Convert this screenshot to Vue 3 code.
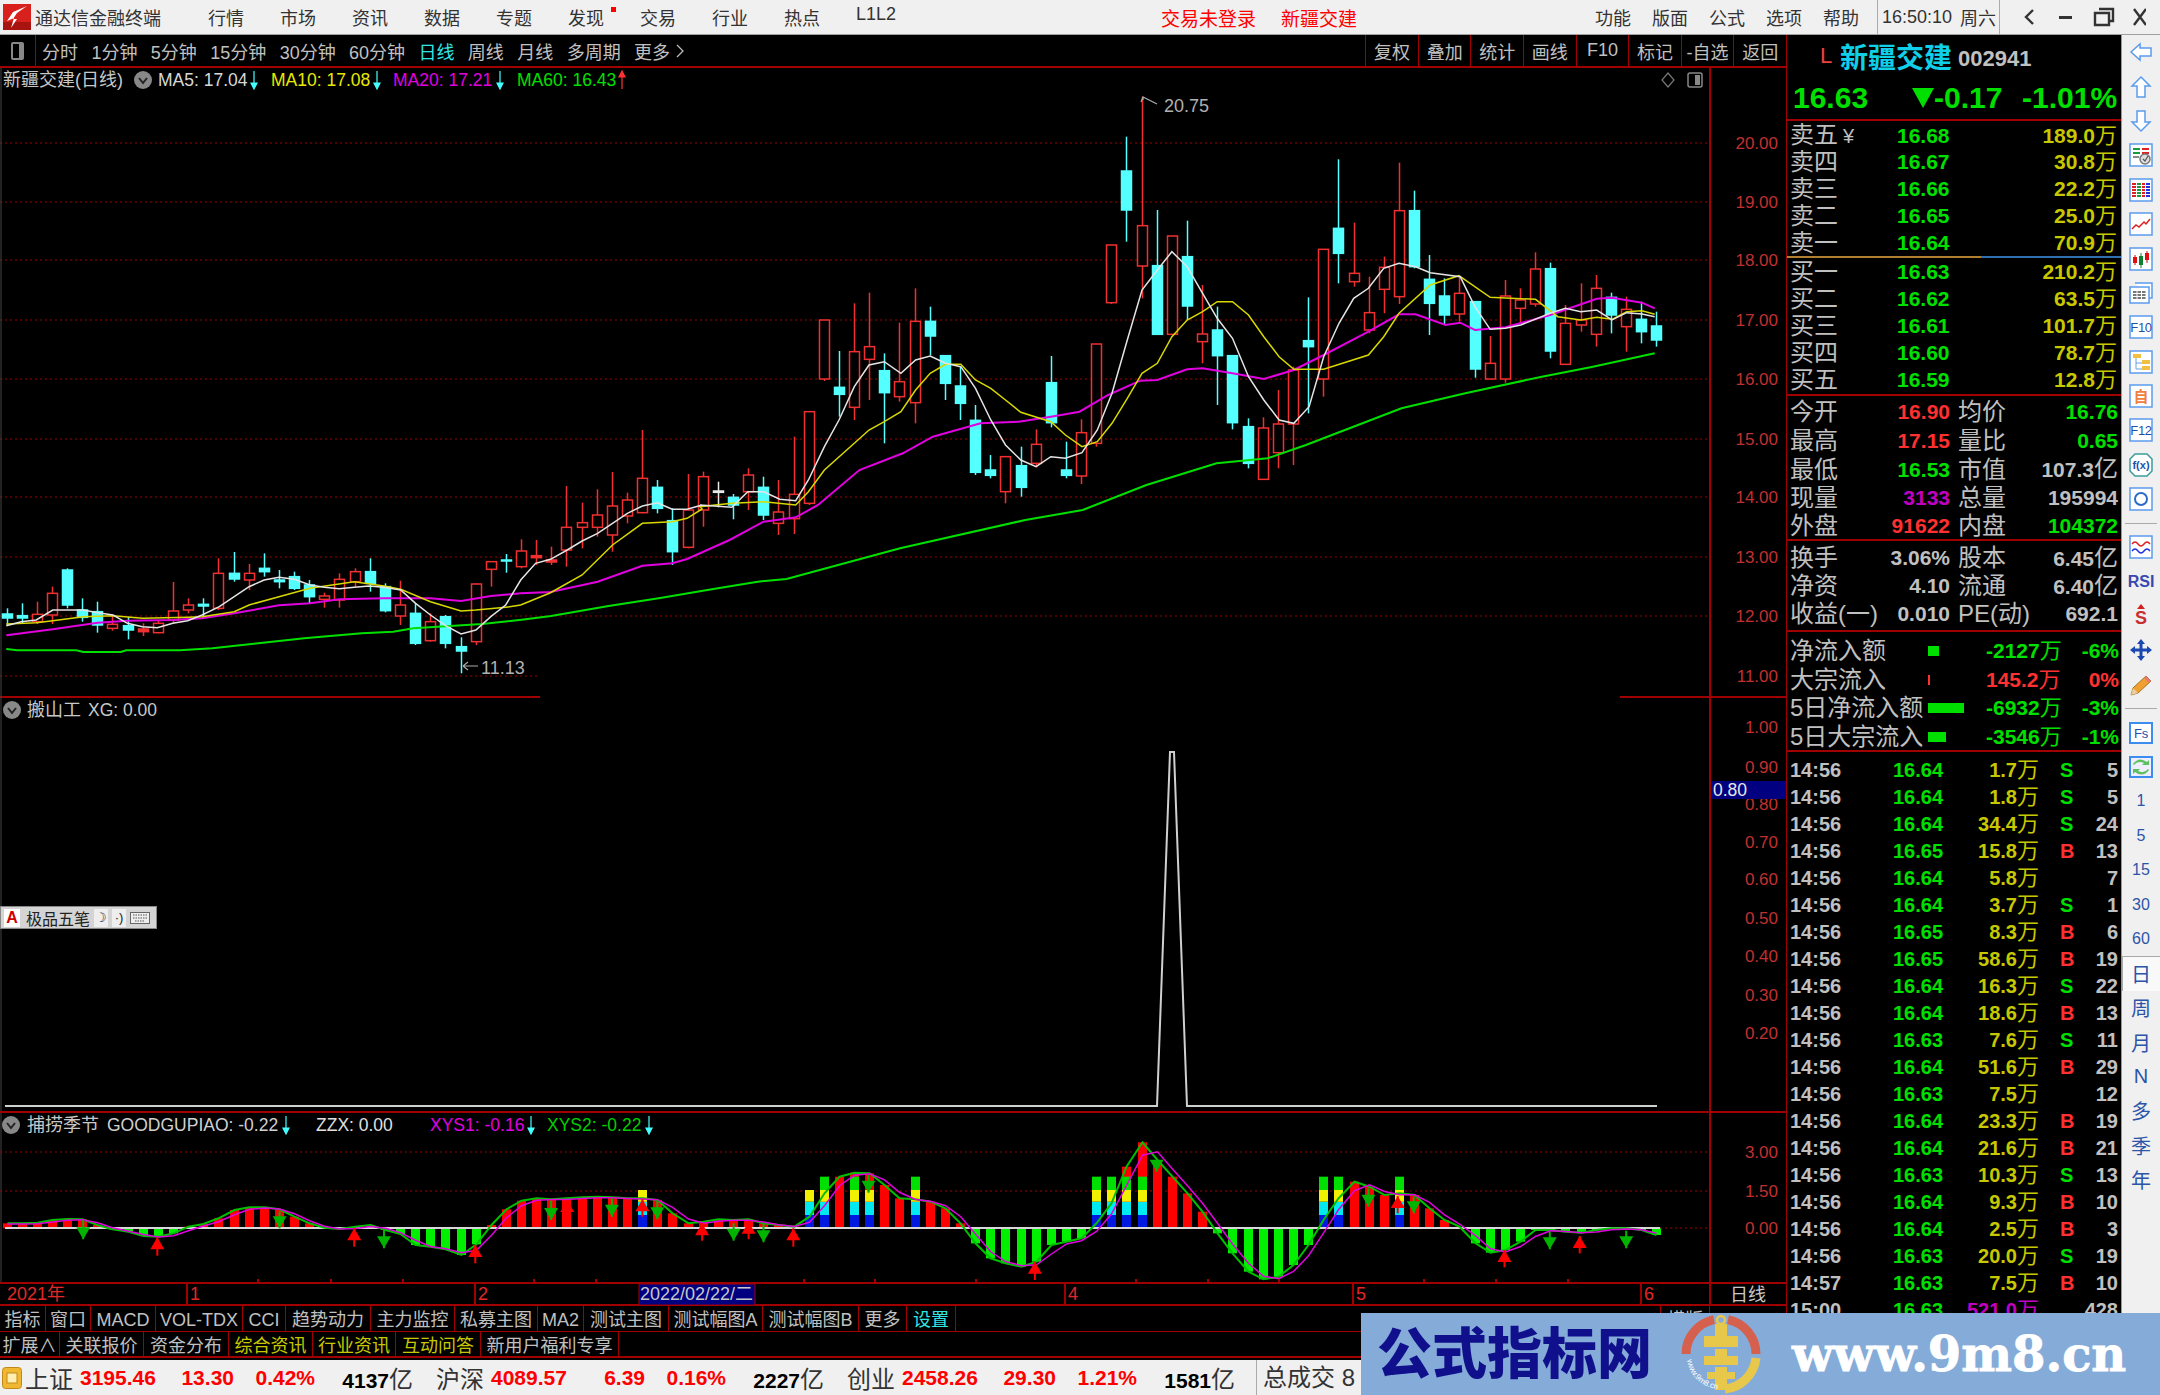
<template>
  <div class="app">
    <!-- 标题栏 -->
    <div class="titlebar">
      <svg class="logo" width="28" height="26" viewBox="0 0 28 26">
        <rect width="28" height="26" fill="#d8201c" />
        <rect x="0" y="18" width="28" height="8" fill="#a81410" />
        <path d="M24 2 L10 8 L4 17 L11 14 L8 24 L14 15 L10 15 L14 9 Z" fill="#fff" />
      </svg>
      <span class="app-name">通达信金融终端</span>
      <div class="menu">
        <span v-for="m in menus" :key="m" class="menu-item" :class="{ flagged: m === '发现' }">{{ m }}</span>
      </div>
      <span class="login-info">交易未登录</span>
      <span class="login-stock">新疆交建</span>
      <div class="menu-right">
        <span v-for="m in menusRight" :key="m">{{ m }}</span>
      </div>
      <div class="clock"><span>16:50:10</span><span>周六</span></div>
      <div class="win-btns">
        <svg width="130" height="24" viewBox="0 0 130 24">
          <path d="M17 5 L10 12 L17 19" fill="none" stroke="#333" stroke-width="2.4" />
          <rect x="43" y="11" width="13" height="3" fill="#333" />
          <path d="M83 4 H97 V16 H93 M79 8 H93 V20 H79 Z" fill="none" stroke="#333" stroke-width="2.4" />
          <path d="M118 4 L130 20 M130 4 L118 20" fill="none" stroke="#333" stroke-width="2.4" />
        </svg>
      </div>
    </div>

    <div class="main">
      <div class="left">
        <!-- 周期工具条 -->
        <div class="toolbar">
          <div class="tb-icon"><i></i></div>
          <div class="periods">
            <span v-for="p in periods" :key="p" :class="{ active: p === '日线' }">{{ p }}</span>
            <span class="more">更多<svg width="10" height="18" viewBox="0 0 10 18"><path d="M2 3 L8 9 L2 15" fill="none" stroke="#bbb" stroke-width="1.3" /></svg></span>
          </div>
          <div class="tb-right">
            <span v-for="b in toolButtons" :key="b">{{ b }}</span>
          </div>
        </div>

        <!-- K线 + 副图 -->
        <svg class="chart" width="1786" height="1238" viewBox="0 68 1786 1238">
          <!-- 价格网格 -->
          <line v-for="a in mainAxis" :key="a.t" x1="0" :x2="a.t === '11.00' ? 540 : 1710" :y1="a.y" :y2="a.y" class="dot" />
          <line x1="0" x2="540" y1="697" y2="697" class="grid" />
          <line x1="1620" x2="1786" y1="697" y2="697" class="grid" />
          <line x1="1710" x2="1710" y1="68" y2="1306" class="grid" />
          <line x1="1" x2="1" y1="68" y2="1283" stroke="#444" />
          <text v-for="a in mainAxis" :key="'m' + a.t" x="1778" :y="a.y + 6" class="axis">{{ a.t }}</text>

          <!-- 蜡烛 -->
          <g v-for="c in candles" :key="c.x">
            <line :x1="c.x" :x2="c.x" :y1="c.wt" :y2="c.wb" :stroke="c.color" stroke-width="1.5" />
            <rect :x="c.x - 5" :y="c.bt" width="10" :height="c.bh" :fill="c.fill" :stroke="c.color" stroke-width="1.5" />
          </g>

          <polyline v-for="m in maLines" :key="m.color" :points="m.pts" :stroke="m.color" :stroke-width="m.w" fill="none" />

          <path d="M1143 100 V97 L1157 104 M1143 97 L1141 102" fill="none" stroke="#aaa" stroke-width="1.2" />
          <text x="1164" y="112" class="mark">20.75</text>
          <path d="M463 666 H478 M463 666 L468 662 M463 666 L468 670" fill="none" stroke="#aaa" stroke-width="1.2" />
          <text x="481" y="674" class="mark">11.13</text>

          <!-- 主图标题 -->
          <text x="3" y="86" class="label">新疆交建(日线)</text>
          <g transform="translate(143 80)"><circle r="9" fill="#888" /><path d="M-4 -2 L0 3 L4 -2" fill="none" stroke="#222" stroke-width="2" /></g>
          <g v-for="l in mainLegend" :key="l.t">
            <text :x="l.x" y="86" class="legend" :fill="l.color">{{ l.t }}</text>
            <path :d="arrowPath(l.ax, 71, l.down)" :stroke="l.down ? '#4ff' : '#f33'" :fill="l.down ? '#4ff' : '#f33'" stroke-width="1.2" />
          </g>
          <path d="M1668 73 L1674 80 L1668 87 L1662 80 Z" fill="none" stroke="#777" stroke-width="1.2" />
          <rect x="1688" y="73" width="14" height="14" rx="2" fill="none" stroke="#888" stroke-width="1.5" />
          <rect x="1695" y="75" width="5" height="10" fill="#888" />

          <!-- 搬山工 -->
          <g transform="translate(12 710)"><circle r="9" fill="#888" /><path d="M-4 -2 L0 3 L4 -2" fill="none" stroke="#222" stroke-width="2" /></g>
          <text x="27" y="716" class="label">搬山工</text>
          <text x="88" y="716" class="legend" fill="#c8c8c8">XG: 0.00</text>
          <text v-for="a in pane1Axis" :key="'a' + a.t" x="1778" :y="a.y + 6" class="axis">{{ a.t }}</text>
          <rect x="1711" y="781" width="75" height="18" fill="#000080" />
          <text x="1713" y="796" class="legend" fill="#e8e8e8">0.80</text>
          <polyline points="5,1106 1157,1106 1170,752 1174,752 1187,1106 1657,1106" fill="none" stroke="#cfcfcf" stroke-width="2" />

          <!-- 捕捞季节 -->
          <line x1="0" x2="1786" y1="1112" y2="1112" class="grid" />
          <g transform="translate(11 1125)"><circle r="9" fill="#888" /><path d="M-4 -2 L0 3 L4 -2" fill="none" stroke="#222" stroke-width="2" /></g>
          <text x="27" y="1131" class="label">捕捞季节</text>
          <g v-for="l in oscLegend" :key="l.t">
            <text :x="l.x" y="1131" class="legend" :fill="l.color">{{ l.t }}</text>
            <path v-if="l.ax" :d="arrowPath(l.ax, 1116, true)" stroke="#4ff" fill="#4ff" stroke-width="1.2" />
          </g>
          <line x1="0" x2="1710" y1="1152" y2="1152" class="dot" />
          <line x1="0" x2="1710" y1="1191" y2="1191" class="dot" />
          <line x1="1660" x2="1710" y1="1228" y2="1228" class="dot" />
          <text v-for="a in pane2Axis" :key="'b' + a.t" x="1778" :y="a.y + 6" class="axis">{{ a.t }}</text>
          <rect v-for="b in oscBars" :key="b.k" :x="b.x" :y="b.y" width="9" :height="b.h" :fill="b.color" />
          <line x1="5" x2="1660" y1="1228" y2="1228" stroke="#d8d8d8" stroke-width="2" />
          <polyline :points="oscLine" fill="none" stroke="#00c000" stroke-width="2" />
          <polyline :points="oscLine2" fill="none" stroke="#e000e0" stroke-width="1.5" />
          <g v-for="a in oscArrows" :key="a.k">
            <line :x1="a.x" :x2="a.x" :y1="a.y1" :y2="a.y2" :stroke="a.color" stroke-width="2" />
            <polygon :points="a.head" :fill="a.color" />
          </g>

          <!-- 时间轴 -->
          <line x1="0" x2="1786" y1="1283" y2="1283" class="grid" />
          <line x1="0" x2="1786" y1="1305" y2="1305" class="grid" />
          <line v-for="t in dateTicks" :key="t" :x1="t" :x2="t" y1="1279" y2="1283" class="grid" />
          <line v-for="d in dateLabels" :key="'d' + d.t" :x1="d.x - 3" :x2="d.x - 3" y1="1283" y2="1305" class="grid" />
          <text x="7" y="1300" class="date">2021年</text>
          <text v-for="d in dateLabels" :key="'e' + d.t" :x="d.x" y="1300" class="date">{{ d.t }}</text>
          <rect x="639" y="1284" width="116" height="21" fill="#000080" stroke="#a00000" />
          <text x="640" y="1300" class="date-sel">2022/02/22/二</text>
          <text x="1730" y="1301" class="label">日线</text>
        </svg>

        <div class="tabs">
          <span v-for="t in tabs1" :key="t.t" :class="{ cyan: t.t === '设置' }" :style="{ width: t.w + 'px' }">{{ t.t }}</span>
          <span class="tab-end">横版</span>
        </div>
        <div class="tabs tabs-second">
          <span v-for="t in tabs2" :key="t.t" :class="{ yellow: t.hot }" :style="{ width: t.w + 'px' }">{{ t.t }}</span>
        </div>

        <!-- 输入法状态条 -->
        <div class="ime">
          <b>A</b><span>极品五笔</span><i>☽</i><i>·)</i>
          <svg width="20" height="12" viewBox="0 0 20 12"><rect x="0.5" y="0.5" width="19" height="11" fill="#eee" stroke="#666" /><path d="M3 3 H17 M3 6 H17 M5 9 H15" stroke="#555" stroke-dasharray="1.5 1" /></svg>
        </div>
      </div>

      <!-- 右侧盘口 -->
      <div class="panel">
        <div class="stock-head">
          <span class="market">L</span><span class="stock-name">新疆交建</span><span class="stock-code">002941</span>
        </div>
        <div class="price-row">
          <span class="price-now">16.63</span>
          <span class="price-chg"><i class="tri"></i>-0.17</span>
          <span class="price-pct">-1.01%</span>
        </div>
        <div class="divider"></div>
        <div v-for="(q, i) in sells" :key="q.n" class="quote">
          <span class="cn">{{ q.n }}<em v-if="i === 0">¥</em></span><span class="green">{{ q.p }}</span><span class="vol">{{ q.v }}<i>万</i></span>
        </div>
        <div class="divider-mid"></div>
        <div v-for="q in buys" :key="q.n" class="quote">
          <span class="cn">{{ q.n }}</span><span class="green">{{ q.p }}</span><span class="vol">{{ q.v }}<i>万</i></span>
        </div>
        <div class="divider after-book"></div>
        <div v-for="s in stats1" :key="s.a" class="stat">
          <span class="cn">{{ s.a }}</span><span :class="s.ca">{{ s.av }}</span><span></span><span class="cn">{{ s.b }}</span><span :class="s.cb">{{ s.bv }}<i v-if="s.bu">{{ s.bu }}</i></span>
        </div>
        <div class="divider"></div>
        <div v-for="s in stats2" :key="s.a" class="stat stat-tight">
          <span class="cn">{{ s.a }}</span><span class="grey">{{ s.av }}</span><span></span><span class="cn">{{ s.b }}</span><span class="grey">{{ s.bv }}<i v-if="s.bu">{{ s.bu }}</i></span>
        </div>
        <div class="divider after-fin"></div>
        <div v-for="f in flows" :key="f.n" class="flow">
          <span class="cn">{{ f.n }}</span>
          <span><i class="flow-bar" :style="{ width: f.w + 'px', background: f.c }"></i></span>
          <span class="flow-val" :style="{ color: f.c }">{{ f.v }}<i>万</i></span>
          <span class="flow-pct" :style="{ color: f.c }">{{ f.p }}</span>
        </div>
        <div class="divider after-flow"></div>
        <div v-for="(t, i) in trades" :key="i" class="trade">
          <span class="grey">{{ t[0] }}</span>
          <span class="green">{{ t[1] }}</span>
          <span class="trade-vol" :class="{ big: t[4] > 400 }">{{ t[2] }}<i>万</i></span>
          <span class="side" :class="t[3] === 'B' ? 'red' : 'green'">{{ t[3] }}</span>
          <span class="grey num">{{ t[4] }}</span>
        </div>
      </div>

      <!-- 右侧工具栏 -->
      <div class="sidebar">
        <div class="side-item"><svg viewBox="0 0 24 24"><polygon points="2,12 11,4 11,8 22,8 22,16 11,16 11,20" class="arrow-ic" /></svg></div>
        <div class="side-item"><svg viewBox="0 0 24 24"><polygon points="12,2 21,11 16,11 16,22 8,22 8,11 3,11" class="arrow-ic" /></svg></div>
        <div class="side-item"><svg viewBox="0 0 24 24"><polygon points="12,22 21,13 16,13 16,2 8,2 8,13 3,13" class="arrow-ic" /></svg></div>
        <div class="side-item"><svg viewBox="0 0 24 24"><rect x="1" y="1" width="22" height="22" class="frame" /><path d="M4 6 H11 M4 10 H11" stroke="#1a9a3c" stroke-width="2" /><path d="M13 6 H20 M13 10 H20" stroke="#e02020" stroke-width="2" /><path d="M4 14 H10" stroke="#888" stroke-width="2" /><circle cx="16" cy="16" r="5" fill="#ddd" stroke="#777" stroke-width="1.5" /><path d="M14 16 L16 18 L19 13" fill="none" stroke="#555" stroke-width="1.2" /></svg></div>
        <div class="side-item"><svg viewBox="0 0 24 24"><rect x="1" y="1" width="22" height="22" class="frame" /><path d="M5 5 V19" stroke="#e02020" stroke-width="4" stroke-dasharray="2 1" /><path d="M10 5 V19" stroke="#1a9a3c" stroke-width="4" stroke-dasharray="2 1" /><path d="M14.5 5 V19" stroke="#e02020" stroke-width="3" stroke-dasharray="2 1" /><path d="M19 5 V19" stroke="#2030e0" stroke-width="4" stroke-dasharray="2 1" /></svg></div>
        <div class="side-item"><svg viewBox="0 0 24 24"><rect x="1" y="1" width="22" height="22" class="frame" /><polyline points="3,17 7,13 10,15 15,10 17,12 21,7" fill="none" stroke="#e02020" stroke-width="1.5" /></svg></div>
        <div class="side-item"><svg viewBox="0 0 24 24"><rect x="1" y="1" width="22" height="22" class="frame" /><path d="M6 8 V18 M18 4 V16" stroke="#c01010" /><path d="M12 6 V21" stroke="#108030" /><rect x="4" y="10" width="4" height="6" fill="#e01010" /><rect x="10" y="9" width="4" height="9" fill="#108030" /><rect x="16" y="6" width="4" height="7" fill="#e01010" /></svg></div>
        <div class="side-item"><svg viewBox="0 0 24 24"><path d="M6 2 H23 V17 H20" class="frame" /><rect x="1" y="6" width="19" height="16" class="frame" /><path d="M4 11 H17 M4 14 H17 M4 17 H17" stroke="#777" stroke-width="2" stroke-dasharray="3.5 1" /></svg></div>
        <div class="side-item"><svg viewBox="0 0 24 24"><rect x="1" y="1" width="22" height="22" class="frame" /><text x="12" y="17" class="ic-text">F10</text></svg></div>
        <div class="side-item"><svg viewBox="0 0 24 24"><rect x="1" y="1" width="22" height="22" class="frame" /><path d="M7 7 V19 H14 M7 13 H14" fill="none" stroke="#6aa0e0" /><rect x="4" y="4" width="8" height="4" fill="#f2c040" /><rect x="13" y="10" width="8" height="4" fill="#f2c040" /><rect x="13" y="16" width="8" height="4" fill="#f2c040" /></svg></div>
        <div class="side-item"><svg viewBox="0 0 24 24"><rect x="1" y="1" width="22" height="22" class="frame" /><text x="12" y="18" class="ic-cn">自</text></svg></div>
        <div class="side-item"><svg viewBox="0 0 24 24"><rect x="1" y="1" width="22" height="22" class="frame" /><text x="12" y="17" class="ic-text">F12</text></svg></div>
        <div class="side-item"><svg viewBox="0 0 24 24"><path d="M6 1 H18 L23 6 V18 L18 23 H6 L1 18 V6 Z" fill="#fff" stroke="#3b9c9c" stroke-width="1.5" /><text x="12" y="16" class="ic-fx">f(x)</text></svg></div>
        <div class="side-item"><svg viewBox="0 0 24 24"><rect x="1" y="1" width="22" height="22" class="frame" /><circle cx="12" cy="12" r="6" fill="none" stroke="#2a6cc8" stroke-width="2" /></svg></div>
        <div class="side-sep"></div>
        <div class="side-item"><svg viewBox="0 0 24 24"><rect x="1" y="1" width="22" height="22" class="frame" /><path d="M3 9 Q6 5 9 9 T15 9 T21 9" fill="none" stroke="#e02020" stroke-width="1.4" /><path d="M3 16 Q6 12 9 16 T15 16 T21 16" fill="none" stroke="#2030e0" stroke-width="1.4" /></svg></div>
        <div class="side-item"><span class="rsi">RSI</span></div>
        <div class="side-item"><svg viewBox="0 0 24 24"><polygon points="12,0 16,5 8,5" fill="#d02020" /><text x="12" y="20" class="ic-s">S</text></svg></div>
        <div class="side-item"><svg viewBox="0 0 24 24"><path d="M12 1 L16 6 H8 Z M12 23 L16 18 H8 Z M1 12 L6 8 V16 Z M23 12 L18 8 V16 Z" fill="#1848b0" /><rect x="6" y="10.5" width="12" height="3" fill="#1848b0" /><rect x="10.5" y="6" width="3" height="12" fill="#1848b0" /></svg></div>
        <div class="side-item"><svg viewBox="0 0 24 24"><polygon points="2,22 4,15 17,3 22,8 9,20" fill="#f0a030" stroke="#a87020" /><polygon points="17,3 22,8 20,10 15,5" fill="#e87878" /><polygon points="2,22 4,15 9,20" fill="#e8d0a0" /></svg></div>
        <div class="side-sep"></div>
        <div class="side-item"><svg viewBox="0 0 24 24"><rect x="1" y="2" width="22" height="20" fill="#fff" stroke="#3d8cf0" stroke-width="2" /><text x="12" y="17" class="ic-text">Fs</text></svg></div>
        <div class="side-item"><svg viewBox="0 0 24 24"><rect x="1" y="2" width="22" height="20" fill="#eef" stroke="#3d8cf0" stroke-width="2" /><path d="M5 10 Q9 5 15 8 L13 10 H20 V5 L18 7 Q10 1 4 9 Z M19 14 Q15 19 9 16 L11 14 H4 V19 L6 17 Q14 23 20 15 Z" fill="#5cc05c" /></svg></div>
        <div v-for="n in sideNums" :key="n" class="side-item side-num">{{ n }}</div>
        <div v-for="c in sideCycles" :key="c" class="side-item side-cn" :class="{ selected: c === '日' }">{{ c }}</div>
      </div>
    </div>

    <!-- 状态栏 -->
    <div class="statusbar">
      <svg width="20" height="22" viewBox="0 0 20 22"><rect x="0.5" y="0.5" width="19" height="21" rx="3" fill="#f0b830" stroke="#c08818" /><rect x="5" y="6" width="10" height="10" fill="#ffeeb0" stroke="#c08818" /></svg>
      <div v-for="s in indices" :key="s.n" class="idx">
        <span class="idx-name">{{ s.n }}</span>
        <span class="idx-red">{{ s.v }}</span>
        <span class="idx-red idx-r">{{ s.c }}</span>
        <span class="idx-red idx-r">{{ s.p }}</span>
        <span class="idx-amt">{{ s.a }}<i>亿</i></span>
      </div>
      <div class="total">总成交 8</div>
    </div>

    <!-- 水印 -->
    <div class="watermark">
      <span class="wm-cn">公式指标网</span>
      <svg class="wm-logo" width="80" height="80" viewBox="0 0 80 80">
        <defs><path id="wm-arc" d="M6 46 A34 34 0 0 0 36 75" /></defs>
        <path d="M5 40 A35 35 0 0 1 33 5.7 M47 5.7 A35 35 0 0 1 75 40" fill="none" stroke="#d5604e" stroke-width="9" />
        <path d="M75 44 A35 35 0 0 1 44 75" fill="none" stroke="#e8c84a" stroke-width="9" />
        <circle cx="40" cy="6" r="4" fill="none" stroke="#e8c84a" stroke-width="2.5" />
        <rect x="34" y="10" width="12" height="66" fill="#e8c84a" />
        <rect x="23" y="22" width="34" height="11" fill="#e8c84a" />
        <rect x="23" y="42" width="34" height="9" fill="#e8c84a" />
        <rect x="26" y="58" width="28" height="7" fill="#e8c84a" />
        <path d="M30 34 H50 M30 52 H50" stroke="#85acd8" stroke-width="2" />
        <text class="wm-mini"><textPath href="#wm-arc">www.9m8.cn</textPath></text>
      </svg>
      <span class="wm-url">www.9m8.cn</span>
    </div>
  </div>
</template>

<script setup>
const menus = ['行情', '市场', '资讯', '数据', '专题', '发现', '交易', '行业', '热点', 'L1L2']
const menusRight = ['功能', '版面', '公式', '选项', '帮助']
const periods = ['分时', '1分钟', '5分钟', '15分钟', '30分钟', '60分钟', '日线', '周线', '月线', '多周期']
const toolButtons = ['复权', '叠加', '统计', '画线', 'F10', '标记', '-自选', '返回']
const tabs1 = [
  { t: '指标', w: 46 }, { t: '窗口', w: 45 }, { t: 'MACD', w: 65 }, { t: 'VOL-TDX', w: 87 }, { t: 'CCI', w: 43 },
  { t: '趋势动力', w: 85 }, { t: '主力监控', w: 84 }, { t: '私募主图', w: 83 }, { t: 'MA2', w: 46 }, { t: '测试主图', w: 85 },
  { t: '测试幅图A', w: 94 }, { t: '测试幅图B', w: 96 }, { t: '更多', w: 48 }, { t: '设置', w: 49 }
]
const tabs2 = [
  { t: '扩展∧', w: 60 }, { t: '关联报价', w: 84 }, { t: '资金分布', w: 85 },
  { t: '综合资讯', w: 84, hot: true }, { t: '行业资讯', w: 83, hot: true }, { t: '互动问答', w: 85, hot: true },
  { t: '新用户福利专享', w: 138 }
]
const sideNums = ['1', '5', '15', '30', '60']
const sideCycles = ['日', '周', '月', 'N', '多', '季', '年']

const STEP = 15.135
const xAt = (i) => Math.round(6.5 + STEP * i) + 0.5

// 前 46 根从 y=480 起量，后面从 y=80 起量（都是 3 倍刻度）
const early = [
  ['c', 385, 402, 414, 435], ['c', 370, 407, 414, 430], ['r', 365, 403, 425, 432], ['r', 320, 340, 405, 432],
  ['c', 265, 270, 375, 385], ['c', 355, 390, 412, 425], ['c', 365, 395, 435, 458], ['r', 405, 433, 445, 452],
  ['c', 410, 437, 450, 478], ['f', 430, 447, 455, 468], ['r', 420, 430, 458, 460], ['r', 306, 393, 420, 430],
  ['r', 355, 375, 390, 400], ['c', 355, 373, 378, 412], ['r', 235, 280, 385, 390], ['c', 216, 280, 297, 305],
  ['r', 252, 280, 300, 330], ['c', 220, 265, 275, 290], ['c', 270, 300, 305, 325], ['c', 275, 290, 325, 330],
  ['c', 300, 315, 350, 372], ['r', 338, 348, 358, 383], ['r', 280, 298, 360, 383], ['r', 265, 275, 305, 320],
  ['c', 235, 275, 310, 335], ['c', 310, 320, 392, 397], ['r', 302, 375, 408, 435], ['c', 370, 400, 490, 495],
  ['r', 400, 425, 482, 485], ['c', 405, 410, 490, 505], ['c', 472, 500, 513, 580], ['r', 310, 312, 485, 495],
  ['r', 243, 245, 268, 320], ['c', 222, 240, 243, 278], ['r', 178, 213, 260, 265], ['f', 180, 227, 233, 255],
  ['f', 200, 240, 246, 255], ['r', 18, 142, 210, 260], ['r', 68, 128, 142, 205], ['r', 28, 105, 142, 170],
  ['r', -24, 78, 165, 215], ['r', 38, 60, 108, 130], ['r', -150, -5, 98, 100], ['c', 0, 22, 85, 100],
  ['c', 85, 122, 215, 255], ['r', -18, 90, 202, 205]
]
const late = [
  ['r', 1175, 1190, 1290, 1340], ['w', 1205, 1233, 1237, 1282], ['c', 1242, 1252, 1275, 1318], ['r', 1165, 1185, 1235, 1290],
  ['c', 1190, 1222, 1305, 1320], ['r', 1200, 1296, 1330, 1365], ['r', 1070, 1243, 1316, 1362], ['r', 995, 995, 1270, 1275],
  ['r', 720, 720, 897, 903], ['c', 813, 922, 943, 1010], ['r', 670, 815, 982, 1020], ['r', 638, 800, 838, 960],
  ['c', 820, 872, 938, 1090], ['r', 728, 905, 950, 965], ['r', 625, 724, 968, 1030], ['c', 680, 724, 768, 826],
  ['c', 826, 827, 910, 960], ['c', 860, 918, 970, 1020], ['c', 975, 1021, 1177, 1185], ['c', 1125, 1170, 1186, 1195],
  ['r', 1130, 1130, 1235, 1270], ['c', 1100, 1157, 1222, 1250], ['r', 1048, 1093, 1150, 1162], ['c', 828, 908, 1028, 1042],
  ['c', 1085, 1170, 1186, 1195], ['r', 1018, 1058, 1188, 1212], ['r', 792, 792, 1090, 1100], ['r', 495, 495, 668, 672],
  ['c', 170, 273, 390, 485], ['r', 50, 437, 558, 655], ['c', 390, 557, 763, 765], ['r', 468, 468, 763, 765],
  ['c', 422, 530, 678, 720], ['r', 615, 762, 785, 850], ['c', 680, 750, 827, 975], ['c', 827, 827, 1028, 1048],
  ['c', 1015, 1040, 1150, 1165], ['r', 1012, 1044, 1198, 1200], ['r', 930, 1032, 1118, 1165], ['r', 860, 870, 1032, 1155],
  ['c', 652, 782, 800, 1000], ['r', 508, 508, 897, 950], ['c', 238, 445, 520, 610], ['r', 428, 580, 605, 620],
  ['r', 590, 698, 750, 760], ['r', 530, 562, 628, 700], ['r', 248, 392, 650, 672], ['c', 332, 392, 560, 565],
  ['c', 525, 598, 670, 765], ['c', 595, 648, 705, 735], ['r', 590, 640, 702, 725], ['c', 665, 665, 867, 893],
  ['r', 768, 850, 897, 897], ['r', 600, 648, 897, 908], ['r', 625, 660, 685, 730], ['r', 517, 567, 672, 680],
  ['c', 548, 566, 813, 835], ['r', 675, 730, 853, 855], ['r', 610, 720, 735, 755], ['r', 585, 625, 763, 800],
  ['c', 638, 652, 705, 760], ['r', 650, 688, 740, 815], ['c', 665, 718, 755, 790], ['c', 695, 738, 780, 800]
]

const palette = {
  r: { color: '#f03030', fill: '#000' },
  f: { color: '#f03030', fill: '#f03030' },
  c: { color: '#54ffff', fill: '#54ffff' },
  w: { color: '#e8e8e8', fill: '#e8e8e8' }
}
const toCandle = (row, i, base) => {
  const [t, wt, bt, bb, wb] = row
  const y = (v) => base + v / 3
  return {
    x: xAt(i),
    wt: y(wt),
    wb: y(wb),
    bt: y(bt),
    bh: Math.max(1, (bb - bt) / 3),
    ...palette[t]
  }
}
const candles = [
  ...early.map((r, i) => toCandle(r, i, 480)),
  ...late.map((r, i) => toCandle(r, i + 46, 80))
]

// 均线折点
const earlyPt = (p) => `${(p[0] / 1.742).toFixed(1)},${(480 + p[1] / 3).toFixed(1)}`
const latePt = (p) => `${(700 + p[0] / 1.568).toFixed(1)},${(80 + p[1] / 3).toFixed(1)}`
const joinPts = (a, b) => [...a.map(earlyPt), ...b.map(latePt)].join(' ')

const maLines = [
  {
    color: '#00e000', w: 2,
    pts: joinPts(
      [[11, 507], [30, 511], [133, 511], [145, 516], [210, 516], [220, 511], [313, 511], [370, 505], [450, 490], [530, 475], [630, 460], [685, 455], [720, 445], [840, 432], [905, 420], [960, 408], [1060, 378], [1150, 354], [1240, 328], [1320, 305], [1370, 297], [1460, 255], [1568, 205]],
      [[510, 1320], [600, 1290], [700, 1215], [810, 1150], [890, 1135], [950, 1095], [1100, 985], [1200, 940], [1320, 890], [1400, 860], [1497, 820]]
    )
  },
  {
    color: '#e000e0', w: 2,
    pts: joinPts(
      [[11, 466], [92, 448], [170, 428], [222, 422], [301, 420], [352, 415], [408, 400], [486, 376], [540, 370], [591, 358], [669, 355], [750, 355], [803, 363], [855, 348], [907, 340], [959, 336], [1041, 305], [1119, 257], [1171, 250], [1197, 237], [1271, 180], [1330, 125]],
      [[120, 1320], [150, 1312], [185, 1275], [250, 1170], [318, 1120], [365, 1070], [440, 1030], [500, 1025], [550, 1010], [595, 995], [640, 945], [690, 902], [717, 900], [764, 868], [788, 865], [835, 880], [884, 897], [931, 870], [978, 825], [1048, 755], [1096, 703], [1122, 703], [1169, 735], [1192, 728], [1215, 750], [1263, 742], [1333, 705], [1406, 656], [1430, 653], [1477, 668], [1497, 685]]
    )
  },
  {
    color: '#d8d800', w: 1.5,
    pts: joinPts(
      [[11, 432], [63, 428], [92, 422], [145, 410], [197, 407], [248, 415], [327, 412], [352, 410], [408, 395], [434, 375], [486, 350], [540, 325], [617, 305], [669, 318], [698, 328], [750, 365], [803, 393], [829, 390], [881, 382], [907, 375], [959, 338], [1014, 285], [1067, 195], [1119, 130], [1171, 125], [1197, 115], [1223, 87]],
      [[0, 1280], [50, 1270], [100, 1265], [150, 1275], [170, 1235], [195, 1170], [242, 1090], [265, 1050], [289, 1025], [315, 995], [338, 930], [361, 880], [385, 853], [409, 853], [432, 900], [456, 925], [479, 960], [503, 997], [550, 1025], [573, 1065], [599, 1100], [623, 1085], [646, 1030], [670, 955], [693, 880], [717, 850], [740, 770], [764, 720], [788, 695], [811, 665], [835, 665], [860, 705], [884, 770], [908, 830], [931, 868], [978, 868], [1048, 825], [1072, 770], [1096, 700], [1145, 615], [1190, 587], [1239, 652], [1310, 658], [1345, 710], [1381, 720], [1406, 712], [1430, 718], [1453, 695], [1477, 692], [1497, 703]]
    )
  },
  {
    color: '#e4e4e4', w: 1.5,
    pts: joinPts(
      [[11, 437], [37, 425], [63, 420], [92, 390], [145, 390], [170, 398], [197, 405], [222, 430], [248, 440], [274, 443], [301, 430], [327, 422], [352, 405], [382, 380], [408, 350], [434, 320], [460, 300], [486, 292], [513, 298], [540, 315], [565, 322], [591, 326], [617, 322], [643, 318], [669, 322], [698, 330], [724, 370], [750, 405], [776, 437], [803, 462], [829, 450], [855, 410], [881, 375], [907, 300], [933, 250], [959, 238], [988, 210], [1014, 183], [1041, 160], [1067, 130], [1093, 100], [1119, 78], [1145, 68], [1171, 88], [1197, 88], [1223, 75]],
      [[0, 1275], [50, 1282], [75, 1235], [100, 1235], [125, 1258], [150, 1262], [170, 1200], [195, 1100], [218, 1020], [242, 920], [265, 855], [289, 845], [315, 880], [338, 840], [361, 828], [385, 850], [409, 860], [432, 925], [456, 1020], [479, 1095], [503, 1140], [527, 1160], [550, 1130], [573, 1135], [599, 1118], [623, 1050], [646, 940], [670, 780], [693, 630], [717, 570], [740, 515], [764, 560], [788, 640], [811, 715], [835, 775], [860, 890], [884, 960], [908, 1020], [931, 1030], [955, 980], [978, 830], [1002, 730], [1025, 655], [1048, 625], [1072, 565], [1096, 550], [1122, 560], [1145, 578], [1192, 590], [1215, 680], [1239, 748], [1263, 745], [1287, 735], [1333, 700], [1357, 685], [1381, 695], [1406, 690], [1430, 720], [1453, 698], [1477, 702], [1497, 710]]
    )
  }
]

const mainAxis = [
  { t: '20.00', y: 143 }, { t: '19.00', y: 202 }, { t: '18.00', y: 260 }, { t: '17.00', y: 320 }, { t: '16.00', y: 379 },
  { t: '15.00', y: 439 }, { t: '14.00', y: 497 }, { t: '13.00', y: 557 }, { t: '12.00', y: 616 }, { t: '11.00', y: 676 }
]
const pane1Axis = [
  { t: '1.00', y: 727 }, { t: '0.90', y: 767 }, { t: '0.80', y: 804 }, { t: '0.70', y: 842 }, { t: '0.60', y: 879 },
  { t: '0.50', y: 918 }, { t: '0.40', y: 956 }, { t: '0.30', y: 995 }, { t: '0.20', y: 1033 }
]
const pane2Axis = [{ t: '3.00', y: 1152 }, { t: '1.50', y: 1191 }, { t: '0.00', y: 1228 }]

const mainLegend = [
  { t: 'MA5: 17.04', x: 158, ax: 254, down: true, color: '#d8d8d8' },
  { t: 'MA10: 17.08', x: 271, ax: 377, down: true, color: '#e8e800' },
  { t: 'MA20: 17.21', x: 393, ax: 500, down: true, color: '#e000e0' },
  { t: 'MA60: 16.43', x: 517, ax: 622, down: false, color: '#00e000' }
]
const oscLegend = [
  { t: 'GOODGUPIAO: -0.22', x: 107, ax: 286, color: '#d0d0d0' },
  { t: 'ZZX: 0.00', x: 316, color: '#e0e0e0' },
  { t: 'XYS1: -0.16', x: 430, ax: 531, color: '#e000e0' },
  { t: 'XYS2: -0.22', x: 547, ax: 649, color: '#00d000' }
]
const arrowPath = (x, top, down) =>
  down
    ? `M${x} ${top} V${top + 13} M${x - 3} ${top + 12} H${x + 3} L${x} ${top + 18} Z`
    : `M${x} ${top + 18} V${top + 5} M${x - 3} ${top + 6} H${x + 3} L${x} ${top} Z`

// 捕捞季节：每根的线值，刻度同样是 3 倍，零轴在 355
const osc = [
  340, 340, 338, 330, 327, 328, 345, 358, 365, 378, 380, 370, 350, 342, 325, 300, 292, 292, 298, 320,
  340, 353, 357, 350, 345, 360, 372, 405, 410, 418, 435, 403, 345, 298, 272, 265, 268, 265, 262, 260,
  262, 265, 265, 270, 310, 340, 335, 328, 330, 328, 340, 345, 350, 320, 250, 200, 188, 190, 225, 265,
  268, 275, 295, 340, 400, 445, 460, 470, 455, 405, 395, 385, 340, 280, 170, 97, 150, 200, 250, 305,
  370, 430, 485, 508, 500, 465, 405, 330, 265, 215, 230, 255, 250, 255, 295, 330, 350, 400, 428, 420,
  395, 360, 360, 365, 368, 360, 355, 355, 360, 375
]
const stackTop = { 42: 240, 53: 240, 54: 200, 56: 200, 57: 240, 60: 200, 72: 200, 73: 200, 74: 200, 75: 200, 87: 200, 88: 200, 92: 200 }
const stackBands = [
  { from: 315, to: 355, color: '#0018e0' },
  { from: 275, to: 315, color: '#00e8f0' },
  { from: 240, to: 275, color: '#f0f000' },
  { from: 200, to: 240, color: '#00e000' }
]
const oscY = (v) => 1110 + v / 3
const oscBars = []
osc.forEach((v, i) => {
  const x = xAt(i) - 4.5
  const up = v < 355
  oscBars.push({
    k: 'b' + i, x,
    y: oscY(Math.min(v, 355)),
    h: Math.abs(v - 355) / 3,
    color: up ? '#ff0000' : '#00f000'
  })
  if (stackTop[i]) {
    stackBands.filter((s) => s.from >= stackTop[i]).forEach((s) => {
      oscBars.push({ k: 's' + i + s.color, x, y: oscY(s.from), h: (s.to - s.from) / 3, color: s.color })
    })
  }
})
const oscLine = osc.map((v, i) => `${xAt(i)},${oscY(v).toFixed(1)}`).join(' ')
const oscLine2 = osc.map((v, i) => {
  const prev = osc[Math.max(0, i - 1)]
  return `${xAt(i)},${oscY((v + prev) / 2 + 2).toFixed(1)}`
}).join(' ')

const makeArrow = (x, y1, y2, down) => {
  const tip = down ? y2 : y1
  const dir = down ? -1 : 1
  return {
    k: `${x}-${y1}`,
    x, y1, y2,
    color: down ? '#00b400' : '#ff0000',
    head: `${x},${tip} ${x - 7},${tip + dir * 12} ${x + 7},${tip + dir * 12}`
  }
}
const a9 = (x) => +(x / 1.742).toFixed(1)
const a10 = (x) => +(900 + x / 1.742).toFixed(1)
const ay = (v) => +(1110 + v / 3).toFixed(1)
const oscArrows = [
  ...[[145, 330, 388], [487, 305, 355], [669, 360, 415], [960, 272, 330], [1066, 265, 320], [1145, 270, 328], [1278, 340, 392], [1330, 340, 397], [1513, 195, 248]]
    .map((a) => makeArrow(a9(a[0]), ay(a[1]), ay(a[2]), true)),
  ...[[274, 382, 437], [617, 355, 410], [828, 405, 460], [988, 270, 325], [1119, 268, 320], [1223, 340, 392], [1304, 335, 388], [1382, 355, 410]]
    .map((a) => makeArrow(a9(a[0]), ay(a[1]), ay(a[2]), false)),
  ...[[447, 150, 185], [816, 235, 290], [895, 260, 310], [1132, 365, 418], [1265, 362, 415]]
    .map((a) => makeArrow(a10(a[0]), ay(a[1]), ay(a[2]), true)),
  ...[[235, 455, 510], [867, 258, 310], [1053, 420, 472], [1184, 378, 430]]
    .map((a) => makeArrow(a10(a[0]), ay(a[1]), ay(a[2]), false))
]

const dateTicks = [258, 331, 403, 534, 596, 804, 875, 976, 1136, 1208, 1279, 1424, 1496, 1568]
const dateLabels = [{ t: '1', x: 190 }, { t: '2', x: 478 }, { t: '4', x: 1068 }, { t: '5', x: 1356 }, { t: '6', x: 1644 }]

const sells = [
  { n: '卖五', p: '16.68', v: '189.0' }, { n: '卖四', p: '16.67', v: '30.8' }, { n: '卖三', p: '16.66', v: '22.2' },
  { n: '卖二', p: '16.65', v: '25.0' }, { n: '卖一', p: '16.64', v: '70.9' }
]
const buys = [
  { n: '买一', p: '16.63', v: '210.2' }, { n: '买二', p: '16.62', v: '63.5' }, { n: '买三', p: '16.61', v: '101.7' },
  { n: '买四', p: '16.60', v: '78.7' }, { n: '买五', p: '16.59', v: '12.8' }
]
const stats1 = [
  { a: '今开', av: '16.90', ca: 'red', b: '均价', bv: '16.76', cb: 'green' },
  { a: '最高', av: '17.15', ca: 'red', b: '量比', bv: '0.65', cb: 'green' },
  { a: '最低', av: '16.53', ca: 'green', b: '市值', bv: '107.3', bu: '亿', cb: 'grey' },
  { a: '现量', av: '3133', ca: 'magenta', b: '总量', bv: '195994', cb: 'grey' },
  { a: '外盘', av: '91622', ca: 'red', b: '内盘', bv: '104372', cb: 'green' }
]
const stats2 = [
  { a: '换手', av: '3.06%', b: '股本', bv: '6.45', bu: '亿' },
  { a: '净资', av: '4.10', b: '流通', bv: '6.40', bu: '亿' },
  { a: '收益(一)', av: '0.010', b: 'PE(动)', bv: '692.1' }
]
const flows = [
  { n: '净流入额', w: 11, c: '#00e000', v: '-2127', p: '-6%' },
  { n: '大宗流入', w: 2, c: '#ff3030', v: '145.2', p: '0%' },
  { n: '5日净流入额', w: 36, c: '#00e000', v: '-6932', p: '-3%' },
  { n: '5日大宗流入', w: 18, c: '#00e000', v: '-3546', p: '-1%' }
]
const trades = [
  ['14:56', '16.64', '1.7', 'S', 5], ['14:56', '16.64', '1.8', 'S', 5], ['14:56', '16.64', '34.4', 'S', 24],
  ['14:56', '16.65', '15.8', 'B', 13], ['14:56', '16.64', '5.8', '', 7], ['14:56', '16.64', '3.7', 'S', 1],
  ['14:56', '16.65', '8.3', 'B', 6], ['14:56', '16.65', '58.6', 'B', 19], ['14:56', '16.64', '16.3', 'S', 22],
  ['14:56', '16.64', '18.6', 'B', 13], ['14:56', '16.63', '7.6', 'S', 11], ['14:56', '16.64', '51.6', 'B', 29],
  ['14:56', '16.63', '7.5', '', 12], ['14:56', '16.64', '23.3', 'B', 19], ['14:56', '16.64', '21.6', 'B', 21],
  ['14:56', '16.63', '10.3', 'S', 13], ['14:56', '16.64', '9.3', 'B', 10], ['14:56', '16.64', '2.5', 'B', 3],
  ['14:56', '16.63', '20.0', 'S', 19], ['14:57', '16.63', '7.5', 'B', 10], ['15:00', '16.63', '521.0', '', 428]
]
const indices = [
  { n: '上证', v: '3195.46', c: '13.30', p: '0.42%', a: '4137' },
  { n: '沪深', v: '4089.57', c: '6.39', p: '0.16%', a: '2227' },
  { n: '创业', v: '2458.26', c: '29.30', p: '1.21%', a: '1581' }
]
</script>

<style scoped>
.app {
  position: relative;
  width: 2160px;
  height: 1395px;
  overflow: hidden;
  display: flex;
  flex-direction: column;
  background: #f0f0f0;
  font-family: "Liberation Sans", "Noto Sans CJK SC", sans-serif;
  color: #c0c0c0;
}

.titlebar {
  height: 34px;
  flex: none;
  display: flex;
  align-items: center;
  padding-left: 3px;
  border-bottom: 1px solid #a0a0a0;
  color: #333;
  font-size: 18px;
  white-space: nowrap;
}
.titlebar > * { flex: none; }
.app-name { margin-left: 4px; width: 126px; }
.menu { display: flex; gap: 36px; margin-left: 47px; }
.menu-item { position: relative; width: 36px; }
.flagged::after {
  content: "";
  position: absolute;
  left: 43px;
  top: 3px;
  width: 5px;
  height: 5px;
  background: #f00;
}
.login-info { color: #f00; font-size: 19px; margin-left: 269px; width: 120px; }
.login-stock { color: #f00; font-size: 19px; }
.menu-right { display: flex; gap: 21px; margin-left: 238px; }
.clock {
  display: flex;
  gap: 8px;
  height: 34px;
  align-items: center;
  margin-left: 18px;
  padding: 0 3px 0 4px;
  border-left: 1px solid #aaa;
  border-right: 1px solid #aaa;
  font-size: 18px;
}
.win-btns { margin-left: 16px; display: flex; }

.main {
  height: 1325px;
  flex: none;
  display: flex;
  overflow: hidden;
}
.left {
  position: relative;
  width: 1786px;
  flex: none;
  background: #000;
  display: flex;
  flex-direction: column;
}
.toolbar {
  height: 31px;
  flex: none;
  display: flex;
  align-items: center;
  border-bottom: 2px solid #a00000;
  font-size: 18px;
}
.tb-icon {
  width: 35px;
  height: 31px;
  flex: none;
  display: flex;
  align-items: center;
  justify-content: center;
  border-right: 1px solid #a00000;
}
.tb-icon i {
  display: block;
  width: 9px;
  height: 14px;
  border: 2px solid #888;
  border-radius: 2px;
  box-shadow: inset -3px 0 0 #888;
}
.periods { display: flex; gap: 13.4px; margin-left: 6px; white-space: nowrap; }
.active { color: #32e6e6; }
.more { display: inline-flex; align-items: center; gap: 5px; }
.tb-right { display: flex; margin-left: auto; height: 31px; }
.tb-right span {
  width: 52.6px;
  box-sizing: border-box;
  display: flex;
  align-items: center;
  justify-content: center;
  border-left: 1px solid #a00000;
}
.chart { display: block; flex: none; background: #000; }
.dot { stroke: #a00000; stroke-width: 1; stroke-dasharray: 2 3; }
.grid { stroke: #a00000; stroke-width: 2; }
.axis { fill: #c03030; font-size: 17px; text-anchor: end; }
.mark { fill: #b0b0b0; font-size: 18px; }
.label { fill: #c8c8c8; font-size: 18px; }
.legend { font-size: 17.5px; }
.date { fill: #e02828; font-size: 18px; }
.date-sel { fill: #c8c8c8; font-size: 18px; }

.tabs {
  height: 26px;
  flex: none;
  display: flex;
  border-bottom: 1px solid #a00000;
  box-sizing: border-box;
  font-size: 18px;
  line-height: 29px;
  white-space: nowrap;
}
.tabs span {
  box-sizing: border-box;
  text-align: center;
  border-right: 1px solid #a00000;
}
.tabs-second { height: 26px; border-bottom: 2px solid #a00000; }
.cyan { color: #32e6e6; }
.yellow { color: #c8c800; }
.tabs .tab-end { margin-left: auto; padding: 0 6px; border-left: 1px solid #a00000; margin-right: 76px; }

.ime {
  position: absolute;
  left: 0;
  top: 871px;
  width: 157px;
  height: 23px;
  box-sizing: border-box;
  display: flex;
  align-items: center;
  gap: 4px;
  padding: 0 3px;
  background: #d4d4d4;
  border: 1px solid #888;
  color: #222;
  font-size: 16px;
}
.ime b { width: 16px; flex: none; margin-right: 2px; text-align: center; color: #d00000; background: #fff; line-height: 18px; }
.ime i { font-style: normal; font-size: 13px; background: #eee; width: 14px; text-align: center; line-height: 18px; }

.panel {
  width: 336px;
  flex: none;
  box-sizing: border-box;
  background: #000;
  border-left: 1px solid #a00000;
  border-right: 1px solid #999;
  font-weight: 700;
  font-size: 21px;
  white-space: nowrap;
}
.panel i { font-style: normal; }
.stock-head {
  height: 42px;
  display: flex;
  align-items: center;
  padding-left: 33px;
}
.market { color: #f04040; font-size: 22px; font-weight: 400; width: 20px; }
.stock-name { color: #10cfe8; font-size: 28px; font-weight: 700; }
.stock-code { color: #c0c0c0; font-size: 22px; margin-left: 6px; margin-top: 5px; }
.price-row {
  height: 42px;
  display: flex;
  align-items: center;
  padding-left: 6px;
  color: #00e000;
  font-size: 30px;
}
.price-now { width: 119px; }
.price-chg { width: 110px; display: flex; align-items: center; }
.tri {
  width: 0;
  height: 0;
  border-left: 11px solid transparent;
  border-right: 11px solid transparent;
  border-top: 20px solid #00e000;
}
.divider { height: 2px; background: #a00000; }
.divider-mid { height: 2px; background: linear-gradient(90deg, #b08030 58%, #3070b0 58%); }
.after-book { margin-top: 1px; margin-bottom: 1px; }
.after-fin { margin-top: 5px; margin-bottom: 1px; }
.after-flow { margin-top: 3px; margin-bottom: 1px; }
.cn { color: #c0c0c0; font-size: 24px; font-weight: 400; }
.cn em { font-style: normal; font-size: 20px; margin-left: 5px; }
.green { color: #00e000; }
.red { color: #ff3030; }
.magenta { color: #c000c0; }
.grey { color: #c0c0c0; }
.quote {
  height: 27px;
  display: grid;
  grid-template-columns: 107px 60px 160px;
  align-items: center;
  padding-left: 3px;
  line-height: 27px;
}
.vol { color: #c8c800; text-align: right; }
.vol i, .trade-vol i, .flow-val i { font-size: 22px; font-weight: 400; }
.stat {
  height: 28.4px;
  box-sizing: border-box;
  padding-top: 1.4px;
  display: grid;
  grid-template-columns: 60px 100px 8px 52px 108px;
  align-items: center;
  padding-left: 3px;
  line-height: 28px;
}
.stat > span:nth-child(2), .stat > span:nth-child(5) { text-align: right; }
.stat i { font-size: 24px; font-weight: 400; }
.stat-tight { height: 28px; padding-top: 2.7px; }
.flow {
  height: 28.6px;
  box-sizing: border-box;
  padding-top: 4px;
  display: grid;
  grid-template-columns: 138px 58px 71px 62px;
  align-items: center;
  padding-left: 3px;
  line-height: 28px;
}
.flow-bar { display: block; height: 10px; }
.flow-val, .flow-pct { text-align: right; }
.trade {
  height: 27px;
  box-sizing: border-box;
  padding-top: 2.7px;
  display: grid;
  grid-template-columns: 103px 60px 86px 40px 39px;
  align-items: center;
  padding-left: 3px;
  line-height: 27px;
  font-size: 20px;
}
.trade-vol { color: #c8c800; text-align: right; }
.trade-vol.big { color: #c000c0; }
.side { padding-left: 21px; }
.num { text-align: right; }

.sidebar {
  width: 38px;
  flex: none;
  background: #f0f0f0;
}
.side-item {
  height: 34.4px;
  display: flex;
  align-items: center;
  justify-content: center;
}
.side-item svg { width: 24px; height: 24px; }
.side-sep { height: 13.5px; display: flex; align-items: center; }
.side-sep::before { content: ""; display: block; width: 100%; margin: 0 3px; height: 1px; background: #aaa; }
.arrow-ic { fill: #fff; stroke: #5b9bec; stroke-width: 1.5; }
.frame { fill: #fff; stroke: #5b9bec; stroke-width: 1.5; }
.ic-text { fill: #1f50a8; font-size: 13px; letter-spacing: -0.3px; text-anchor: middle; }
.ic-cn { fill: #f08040; font-size: 15px; font-weight: 700; text-anchor: middle; }
.ic-fx { fill: #2050b0; font-size: 11px; font-weight: 700; text-anchor: middle; }
.ic-s { fill: #c83030; font-size: 18px; font-weight: 700; text-anchor: middle; }
.rsi { color: #3848b0; font-size: 16px; font-weight: 700; }
.side-num { color: #2c55a8; font-size: 16px; }
.side-cn { color: #2c55a8; font-size: 20px; }
.selected {
  background: #f9f9f9;
  box-shadow: inset 1px 1px 0 #aaa;
}

.statusbar {
  height: 35px;
  flex: none;
  display: flex;
  align-items: center;
  padding-left: 2px;
  white-space: nowrap;
  color: #111;
}
.statusbar svg { flex: none; }
.idx {
  display: grid;
  grid-template-columns: 55px 76px 78px 81px 98px;
  flex: none;
  width: 411px;
  align-items: center;
}
.idx:first-of-type { margin-left: 3px; }
.idx-name { font-size: 24px; color: #333; }
.idx-red { color: #f00; font-size: 21px; font-weight: 700; }
.idx-r { text-align: right; }
.idx-amt { text-align: right; font-size: 21px; font-weight: 700; color: #000; }
.idx-amt i { font-style: normal; font-weight: 400; font-size: 24px; color: #333; }
.total {
  font-size: 24px;
  color: #333;
  border-left: 1px solid #aaa;
  padding-left: 6px;
  height: 35px;
  line-height: 35px;
  margin-left: -2px;
}

.watermark {
  position: absolute;
  right: 0;
  bottom: 0;
  width: 799px;
  height: 82px;
  display: flex;
  align-items: center;
  padding-left: 16px;
  box-sizing: border-box;
  background: #85acd8;
  white-space: nowrap;
}
.wm-cn {
  width: 277px;
  color: #10108c;
  font-size: 55px;
  font-weight: 900;
  line-height: 1;
}
.wm-logo { margin-left: 27px; flex: none; }
.wm-mini { fill: #fff; font-size: 8px; }
.wm-url {
  margin-left: 31px;
  color: #fff;
  font-family: "DejaVu Serif", serif;
  font-weight: 700;
  font-size: 48px;
  -webkit-text-stroke: 0.8px #fff;
}
</style>

<style>
html, body { margin: 0; padding: 0; background: #f0f0f0; overflow: hidden; }
</style>
